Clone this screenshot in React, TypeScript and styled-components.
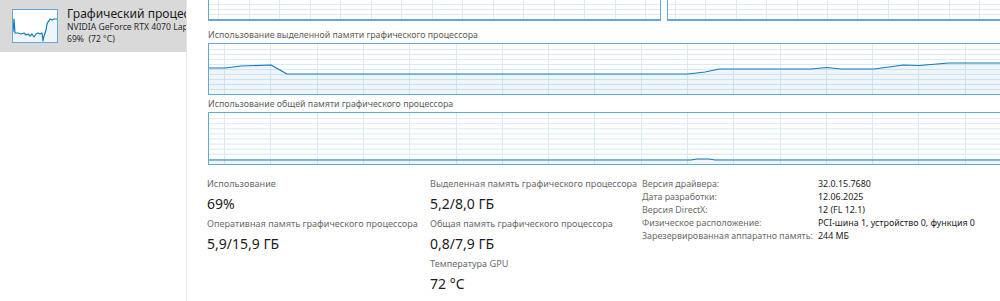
import React from 'react';
import styled, { createGlobalStyle } from 'styled-components';

const GlobalStyle = createGlobalStyle`
  html, body {
    margin: 0;
    padding: 0;
    background: #ffffff;
  }
  body {
    font-family: "Noto Sans", "Open Sans", sans-serif;
    color: #1b1b1b;
  }
`;

const LINE = '#117dbb';
const BORDER = '#64a8d8';
const GRID = '#dbeaf5';
const FILL = 'rgba(17, 125, 187, 0.07)';

type Pt = [number, number];

// grid + data drawing for the graph panels
const Graph: React.FC<{
  w: number;
  h: number;
  rows: number;
  colStep: number;
  colOffset: number;
  data?: Pt[];
  alignBottom?: boolean;
}> = ({ w, h, rows, colStep, colOffset, data, alignBottom }) => {
  const rowStep = alignBottom ? 5 : h / rows;
  const hLines: number[] = [];
  if (alignBottom) {
    for (let y = h - rowStep; y > 0; y -= rowStep) hLines.push(y);
  } else {
    for (let i = 1; i < rows; i++) hLines.push(i * rowStep);
  }
  const vLines: number[] = [];
  for (let x = colOffset; x < w; x += colStep) vLines.push(x);
  const line = data ? data.map(p => `${p[0]},${p[1]}`).join(' ') : '';
  const area = data
    ? `M${data[0][0]},${h} L${line.split(' ').join(' L')} L${data[data.length - 1][0]},${h} Z`
    : '';
  return (
    <svg width={w} height={h} style={{ display: 'block' }}>
      {hLines.map(y => (
        <line key={'h' + y} x1={0} x2={w} y1={y + 0.5} y2={y + 0.5} stroke={GRID} strokeWidth={1} />
      ))}
      {vLines.map(x => (
        <line key={'v' + x} x1={Math.round(x) + 0.5} x2={Math.round(x) + 0.5} y1={0} y2={h} stroke={GRID} strokeWidth={1} />
      ))}
      {data && <path d={area} fill={FILL} />}
      {data && <polyline points={line} fill="none" stroke={LINE} strokeWidth={1.2} strokeLinejoin="round" />}
    </svg>
  );
};

const dedicated: Pt[] = [
  [0, 24], [16, 24], [32, 22], [62, 21], [78, 30], [479, 30], [496, 28], [510, 25],
  [602, 25], [618, 23.5], [632, 25], [665, 25], [680, 23], [694, 21], [710, 21.5],
  [740, 19], [900, 19],
];

const shared: Pt[] = [
  [0, 47], [482, 47], [488, 46], [500, 46], [506, 47], [900, 47],
];

const thumb: Pt[] = [
  [0, 22], [1, 9], [2, 23], [5, 23], [8, 24], [11, 23], [13, 25], [15, 24], [17, 26],
  [19, 24], [21, 27], [23, 24], [25, 23], [27, 24], [29, 23], [30, 31], [31, 26],
  [32, 23], [33, 20], [34, 14], [35, 12], [36, 11], [37, 9], [39, 10], [41, 9], [46, 9],
];

const App: React.FC = () => {
  return (
    <>
      <GlobalStyle />
      <Window>
        <Sidebar>
          <SideItem selected>
            <Thumb>
              <Graph w={44} h={32} rows={1} colStep={100} colOffset={100} data={thumb} />
            </Thumb>
            <SideText>
              <SideTitle>Графический процессор 0</SideTitle>
              <SideSub>NVIDIA GeForce RTX 4070 Laptop GPU</SideSub>
              <SideSub>69%&nbsp; (72 °C)</SideSub>
            </SideText>
          </SideItem>
        </Sidebar>
        <Main>
          <TopRow>
            <CutChart width={453}>
              <Graph w={451} h={19} rows={4} colStep={30.5} colOffset={9} alignBottom />
            </CutChart>
            <CutChart width={460}>
              <Graph w={458} h={19} rows={4} colStep={30.4} colOffset={7} alignBottom />
            </CutChart>
          </TopRow>
          <ChartLabel>Использование выделенной памяти графического процессора</ChartLabel>
          <Chart height={52}>
            <Graph w={900} h={50} rows={10} colStep={46.3} colOffset={15} data={dedicated} />
          </Chart>
          <ChartLabel>Использование общей памяти графического процессора</ChartLabel>
          <Chart height={53}>
            <Graph w={900} h={51} rows={10} colStep={46.3} colOffset={15} data={shared} />
          </Chart>
          <Stats>
            <StatColumn>
              <Stat>
                <StatLabel>Использование</StatLabel>
                <StatValue>69%</StatValue>
              </Stat>
              <Stat>
                <StatLabel>Оперативная память графического процессора</StatLabel>
                <StatValue>5,9/15,9 ГБ</StatValue>
              </Stat>
            </StatColumn>
            <StatColumn>
              <Stat>
                <StatLabel>Выделенная память графического процессора</StatLabel>
                <StatValue>5,2/8,0 ГБ</StatValue>
              </Stat>
              <Stat>
                <StatLabel>Общая память графического процессора</StatLabel>
                <StatValue>0,8/7,9 ГБ</StatValue>
              </Stat>
              <Stat>
                <StatLabel>Температура GPU</StatLabel>
                <StatValue>72 °C</StatValue>
              </Stat>
            </StatColumn>
            <InfoTable>
              <InfoKey>Версия драйвера:</InfoKey>
              <InfoValue>32.0.15.7680</InfoValue>
              <InfoKey>Дата разработки:</InfoKey>
              <InfoValue>12.06.2025</InfoValue>
              <InfoKey>Версия DirectX:</InfoKey>
              <InfoValue>12 (FL 12.1)</InfoValue>
              <InfoKey>Физическое расположение:</InfoKey>
              <InfoValue>PCI-шина 1, устройство 0, функция 0</InfoValue>
              <InfoKey>Зарезервированная аппаратно память:</InfoKey>
              <InfoValue>244 МБ</InfoValue>
            </InfoTable>
          </Stats>
        </Main>
      </Window>
    </>
  );
};

const Window = styled.div`
width: 1000px;
height: 301px;
overflow: hidden;
display: flex;
flex-direction: row;
background: #ffffff;
`;

const Sidebar = styled.div`
width: 186px;
flex-shrink: 0;
border-right: 1px solid #e6e6e6;
overflow: hidden;
`;

const SideItem = styled.div<{ selected?: boolean }>`
height: 52px;
display: flex;
flex-direction: row;
align-items: flex-start;
background: ${p => (p.selected ? '#d9d9d9' : 'transparent')};
padding: 9px 0 0 12px;
box-sizing: border-box;
`;

const Thumb = styled.div`
width: 44px;
height: 32px;
border: 1px solid ${BORDER};
background: #ffffff;
flex-shrink: 0;
`;

const SideText = styled.div`
margin-left: 9px;
white-space: nowrap;
overflow: hidden;
margin-top: -2px;
`;

const SideTitle = styled.div`
font-size: 12.1px;
line-height: 14px;
color: #1b1b1b;
`;

const SideSub = styled.div`
font-size: 8.6px;
line-height: 12px;
color: #2b2b2b;
`;

const Main = styled.div`
flex: 1;
padding-left: 20px;
overflow: hidden;
`;

const TopRow = styled.div`
display: flex;
flex-direction: row;
gap: 6px;
height: 21px;
margin-left: 1px;
margin-bottom: 8px;
`;

const CutChart = styled.div<{ width: number }>`
width: ${p => p.width}px;
height: 21px;
box-sizing: border-box;
border: 1px solid ${BORDER};
border-top: none;
border-bottom-width: 2px;
flex-shrink: 0;
`;

const ChartLabel = styled.div`
font-size: 8.8px;
line-height: 13px;
color: #5e5e5e;
white-space: nowrap;
margin-left: 1px;
`;

const Chart = styled.div<{ height: number }>`
height: ${p => p.height}px;
width: 900px;
box-sizing: border-box;
border: 1px solid ${BORDER};
border-right: none;
margin: 1px 0 3px 1px;
overflow: hidden;
`;

const Stats = styled.div`
display: flex;
flex-direction: row;
padding-top: 7px;
`;

const StatColumn = styled.div`
width: 223px;
display: flex;
flex-direction: column;
&:nth-child(2) {
  width: 212px;
}
`;

const Stat = styled.div`
display: flex;
flex-direction: column;
align-items: flex-start;
`;

const StatLabel = styled.div`
font-size: 9.1px;
line-height: 17px;
color: #6b6b6b;
white-space: nowrap;
`;

const StatValue = styled.div`
font-size: 14px;
line-height: 23px;
color: #1b1b1b;
white-space: nowrap;
`;

const InfoTable = styled.div`
display: grid;
grid-template-columns: 176px auto;
grid-auto-rows: 13px;
padding-top: 2px;
font-size: 8.9px;
line-height: 13px;
white-space: nowrap;
`;

const InfoKey = styled.div`
color: #6b6b6b;
`;

const InfoValue = styled.div`
color: #1b1b1b;
`;

export default App;
